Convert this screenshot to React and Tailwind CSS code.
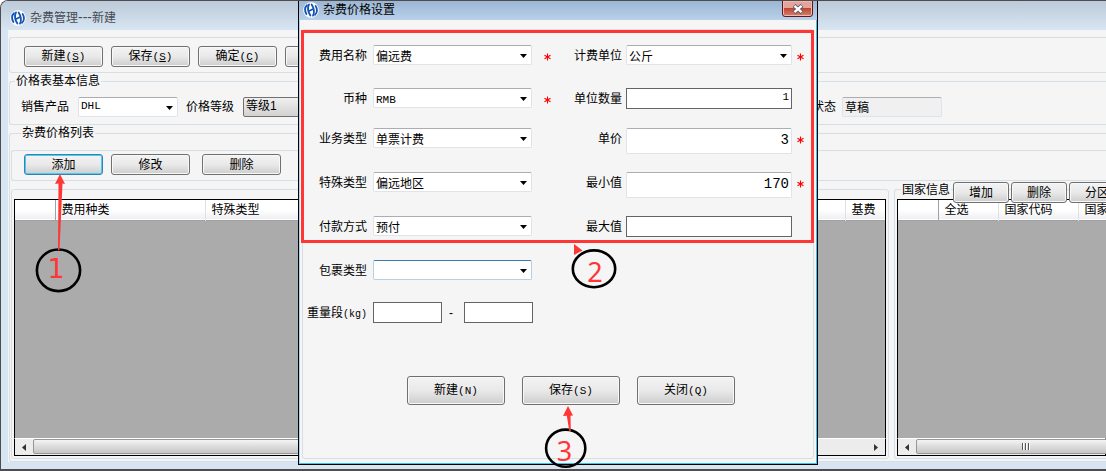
import clsx from 'clsx';

const baseColumns = [
  { name: '费用种类', width: 'w-[150px]' },
  { name: '特殊类型', width: 'w-[150px]' },
];

const countryColumns = [
  { name: '全选', width: 'w-[60px]' },
  { name: '国家代码', width: 'w-20' },
  { name: '国家名称', width: 'w-20' },
];

const Logo = () => (
  <svg width="16" height="16" viewBox="0 0 16 16" className="shrink-0" aria-hidden="true">
    <circle cx="8" cy="8" r="7.8" fill="#fff" />
    <g fill="none" stroke="#1353b4" strokeWidth="1.8" strokeLinecap="round">
      <path d="M4 3.2C1.6 5.2 1.4 9.2 3.4 12" />
      <path d="M12 12.8C14.4 10.8 14.6 6.8 12.6 4" />
      <path d="M6 2.4C4.4 5.6 5 10 7.4 13.6" />
      <path d="M10 13.6C11.6 10.4 11 6 8.6 2.4" />
      <path d="M6 9L10.2 7" />
    </g>
  </svg>
);

// Texto latino en mono para que mida la mitad de un carácter chino
const Key = ({ children, underline }) => (
  <span className="font-['Liberation_Mono'] text-[11px]">
    (<span className={clsx(underline && 'underline')}>{children}</span>)
  </span>
);

const WinButton = ({ children, className, active, label }) => (
  <button
    type="button"
    aria-label={label}
    className={clsx(
      'shrink-0 rounded-[3px] border bg-linear-to-b from-[#f3f3f3] from-0% via-[#e9e9e9] via-50% to-[#cdcdcd] whitespace-nowrap text-center leading-none',
      active ? 'border-[#3c7fb1] ring-1 ring-inset ring-[#46cdf5]' : 'border-[#707070] ring-1 ring-inset ring-[#f8f8f8]',
      className
    )}
  >
    {children}
  </button>
);

const Combo = ({ id, value, className, focused, disabled, latin }) => (
  <div className={clsx('relative h-5', className)}>
    <select
      id={id}
      defaultValue={value}
      className={clsx(
        'h-full w-full appearance-none rounded-[2px] border pl-[2px] pb-[2px] text-black outline-none',
        disabled
          ? 'border-[#707070] bg-linear-to-b from-[#f0f0f0] to-[#d2d2d2]'
          : focused
            ? 'border-[#b5cfe7] border-t-[#3d7bad] bg-white'
            : 'border-[#e2e3ea] border-t-[#abadb3] bg-white',
        latin && "font-['Liberation_Mono'] text-[11px]"
      )}
    >
      <option value={value}>{value}</option>
    </select>
    <svg width="7" height="4" viewBox="0 0 7 4" className="pointer-events-none absolute right-[5px] top-[9px]" aria-hidden="true">
      <path d="M0 0h7L3.5 4z" fill="#000" />
    </svg>
  </div>
);

const TextBox = ({ id, value = '', className, flat, label }) => (
  <input
    id={id}
    type="text"
    aria-label={label}
    defaultValue={value}
    className={clsx(
      "border bg-white px-[2px] text-right font-['Liberation_Mono'] text-black outline-none",
      flat ? 'h-[21px] border-[#646464] pb-1 text-[11px]' : 'h-[26px] rounded-[2px] border-[#e2e3ea] border-t-[#abadb3] pb-[2px] text-sm',
      className
    )}
  />
);

const Star = ({ show }) => (
  <span className="pt-2">
    {show && (
      <svg width="7" height="8" viewBox="0 0 7 8" aria-hidden="true">
        <path d="M3.5 0.5v7M0.5 2.2l6 3.6M6.5 2.2l-6 3.6" stroke="#ff0000" strokeWidth="1.1" />
      </svg>
    )}
  </span>
);

const Grid = ({ columns, last, className }) => (
  <div className={clsx('flex min-h-0 flex-1 flex-col overflow-hidden border border-black bg-[#ababab]', className)}>
    <table className="w-full table-fixed border-collapse">
      <thead>
        <tr className="h-5 border-b border-[#a0a0a0] bg-linear-to-b from-white from-50% to-[#eff0f3]">
          <th className="w-10 border-r border-[#a0a0a0]" />
          {columns.map((col) => (
            <th key={col.name} className={clsx('overflow-hidden border-r border-[#dfe0e3] p-0 pl-[6px] pt-px text-left font-normal leading-4 whitespace-nowrap', col.width)}>
              {col.name}
            </th>
          ))}
          <th className="p-0" />
          {last && (
            <th className="w-10 border-l border-[#dfe0e3] p-0 pl-[6px] pt-px text-left font-normal leading-4 whitespace-nowrap">{last}</th>
          )}
        </tr>
      </thead>
    </table>
  </div>
);

const ScrollArrow = ({ right }) => (
  <span className="flex w-[18px] shrink-0 items-center justify-center">
    <svg width="4" height="7" viewBox="0 0 4 7" aria-hidden="true">
      <path d={right ? 'M0 0v7L4 3.5z' : 'M4 0v7L0 3.5z'} fill="#333" />
    </svg>
  </span>
);

const ScrollBar = ({ grip, thumb, arrow }) => (
  <div className="flex h-[18px] shrink-0 border border-t-white border-black bg-[#ececec]">
    <ScrollArrow />
    <div className={clsx('flex h-[15px] items-center justify-center rounded-[2px] border border-[#979797] bg-linear-to-b from-[#f4f4f4] via-[#dcdcdc] to-[#c6c6c8]', thumb)}>
      {grip && (
        <span className="flex gap-px">
          <span className="h-[7px] w-[2px] border-r border-white bg-[#555]" />
          <span className="h-[7px] w-[2px] border-r border-white bg-[#555]" />
          <span className="h-[7px] w-[2px] border-r border-white bg-[#555]" />
        </span>
      )}
    </div>
    {arrow && (
      <>
        <span className="flex-1" />
        <ScrollArrow right />
      </>
    )}
  </div>
);

const PriceDialog = () => (
  <section className="absolute -top-px left-[297px] flex h-[465px] w-[520px] flex-col border border-t-0 border-black bg-[#f5f5f5]">
    <header className="flex h-5 shrink-0 items-center justify-between bg-linear-to-b from-[#9ab5d2] to-[#b9d1ea] pl-1 pr-1">
      <div className="flex items-center gap-1">
        <Logo />
        <h2 className="leading-4">杂费价格设置</h2>
      </div>
      <button
        type="button"
        aria-label="关闭"
        className="flex h-[17px] w-[31px] items-center justify-center self-start rounded-b-[3px] border border-[#5a1a1e] bg-linear-to-b from-[#e5a49b] from-45% via-[#bd4630] via-50% to-[#d5806c] ring-1 ring-inset ring-[#f0b8ae]"
      >
        <svg width="12" height="10" viewBox="0 0 12 10" aria-hidden="true">
          <path d="M2 1.5l8 7M10 1.5l-8 7" stroke="#535666" strokeWidth="4" />
          <path d="M2.4 1.8l7.2 6.4M9.6 1.8l-7.2 6.4" stroke="#fff" strokeWidth="2.4" />
        </svg>
      </button>
    </header>
    <div className="flex flex-1 flex-col border border-t-0 border-b-[#35c4f0] border-l-[#a9d4ef] border-r-[#35c4f0] px-[2px] pb-1 pt-[9px]">
      <form className="flex-1 rounded-[3px] border border-[#d5dfe5] pt-[15px]">
        <div className="grid grid-cols-[70px_159px_12px_26px_56px_166px_5px_7px] grid-rows-[43px_40px_44px_44px_44px_42px_auto] items-start leading-[22px]">
          <label htmlFor="feeName" className="pr-[6px] text-right whitespace-nowrap">费用名称</label>
          <Combo id="feeName" value="偏远费" />
          <span />
          <Star show />
          <label htmlFor="unit" className="pr-1 text-right whitespace-nowrap">计费单位</label>
          <Combo id="unit" value="公斤" />
          <span />
          <Star show />

          <label htmlFor="currency" className="pr-[6px] text-right whitespace-nowrap">币种</label>
          <Combo id="currency" value="RMB" latin />
          <span />
          <Star show />
          <label htmlFor="unitCount" className="pr-1 text-right whitespace-nowrap">单位数量</label>
          <TextBox id="unitCount" value="1" flat />
          <span />
          <Star />

          <label htmlFor="business" className="pr-[6px] text-right whitespace-nowrap">业务类型</label>
          <Combo id="business" value="单票计费" />
          <span />
          <Star />
          <label htmlFor="price" className="pr-1 text-right whitespace-nowrap">单价</label>
          <TextBox id="price" value="3" />
          <span />
          <Star show />

          <label htmlFor="special" className="pr-[6px] text-right whitespace-nowrap">特殊类型</label>
          <Combo id="special" value="偏远地区" />
          <span />
          <Star />
          <label htmlFor="min" className="pr-1 text-right whitespace-nowrap">最小值</label>
          <TextBox id="min" value="170" />
          <span />
          <Star show />

          <label htmlFor="payment" className="pr-[6px] text-right whitespace-nowrap">付款方式</label>
          <Combo id="payment" value="预付" />
          <span />
          <Star />
          <label htmlFor="max" className="pr-1 text-right whitespace-nowrap">最大值</label>
          <TextBox id="max" flat />
          <span />
          <Star />

          <label htmlFor="package" className="pr-[6px] text-right whitespace-nowrap">包裹类型</label>
          <Combo id="package" value="" focused />
          <span className="col-span-6" />

          <label htmlFor="weightFrom" className="pr-[6px] text-right whitespace-nowrap">
            重量段<span className="font-['Liberation_Mono'] text-[10px]">(kg)</span>
          </label>
          <div className="col-span-7 flex items-center">
            <TextBox id="weightFrom" flat className="w-[69px]" />
            <span className="w-[22px] pr-1 text-center leading-5">-</span>
            <TextBox id="weightTo" flat label="重量段" className="w-[69px]" />
          </div>
        </div>
        <div className="flex gap-[17px] pl-[104px] pt-[50px]">
          <WinButton className="h-[29px] w-[98px]">新建<Key>N</Key></WinButton>
          <WinButton className="h-[29px] w-[98px]">保存<Key>S</Key></WinButton>
          <WinButton className="h-[29px] w-[98px]">关闭<Key>Q</Key></WinButton>
        </div>
      </form>
    </div>
  </section>
);

// Marcas rojas y números de los pasos
const Steps = () => (
  <svg width="820" height="471" viewBox="0 0 820 471" className="pointer-events-none absolute -left-px -top-px" aria-hidden="true">
    <rect x="302.5" y="31.5" width="510" height="210" fill="none" stroke="#ff3636" strokeWidth="3" />
    <g fill="none" stroke="#000" strokeWidth="2.6">
      <ellipse cx="58.5" cy="270.3" rx="21.6" ry="20.8" />
      <ellipse cx="594" cy="268.8" rx="21.2" ry="18.4" />
      <ellipse cx="565.7" cy="448.2" rx="19.6" ry="18.6" />
    </g>
    <g fill="#ff3636">
      <path d="M60 174l5 10-2.5-.5L59.5 250h-1.5L58.5 183.5 55 184z" />
      <path d="M574 244v11l8.5-4.5z" />
      <path d="M568 406l5 9.5-2.5.2.3 15.300h-1.500l-2.500-15.300-3.800.3z" />
    </g>
    <g fill="#ff3636" fontSize="27" fontFamily="'Noto Sans', sans-serif" textAnchor="middle">
      <text x="56" y="278" fontFamily="'DejaVu Sans', sans-serif">1</text>
      <text x="595" y="282">2</text>
      <text x="564.5" y="461">3</text>
    </g>
  </svg>
);

const App = () => {
  return (
    <div className="relative flex h-screen min-h-[471px] flex-col overflow-hidden rounded-tl-lg border-b-2 border-l border-t border-[#4f4c50] bg-[#d7e4f2] font-['Liberation_Sans','Noto_Sans_CJK_SC',sans-serif] text-xs text-black">
      <header className="flex h-[29px] shrink-0 items-center gap-1 bg-linear-to-b from-[#bccad9] to-[#d8e5f2] pl-[9px] pt-1">
        <Logo />
        <h1 className="text-[#454b55]">杂费管理<span className="text-sm leading-none">---</span>新建</h1>
      </header>

      <main className="ml-[7px] mb-[7px] flex min-h-0 flex-1 flex-col bg-[#f5f5f5] pl-px pt-[7px]">
        <div className="flex h-9 shrink-0 gap-2 rounded-l-[3px] border border-r-0 border-[#d5dfe5] pl-[14px] pt-2">
          <WinButton className="h-[21px] w-[79px]">新建<Key underline>S</Key></WinButton>
          <WinButton className="h-[21px] w-[79px]">保存<Key underline>S</Key></WinButton>
          <WinButton className="h-[21px] w-[79px]">确定<Key underline>C</Key></WinButton>
          <WinButton className="h-[21px] w-[79px]" label="取消" />
        </div>

        <fieldset className="h-[52px] shrink-0 rounded-l-[3px] border border-r-0 border-[#d5dfe5]">
          <legend className="ml-[5px] px-px leading-4">价格表基本信息</legend>
          <div className="grid grid-cols-[165px_626px_auto] pl-[11px] pt-2">
            <div className="flex items-center gap-[9px]">
              <label htmlFor="product" className="whitespace-nowrap">销售产品</label>
              <Combo id="product" value="DHL" latin className="w-[100px]" />
            </div>
            <div className="flex items-center gap-[9px]">
              <label htmlFor="level" className="whitespace-nowrap">价格等级</label>
              <Combo id="level" value="等级1" disabled className="w-[100px]" />
            </div>
            <div className="flex items-center gap-[6px]">
              <label htmlFor="state" className="whitespace-nowrap">状态</label>
              <input id="state" type="text" readOnly value="草稿" className="h-5 w-[100px] rounded-[2px] border border-[#e2e3ea] border-t-[#abadb3] bg-[#f0f0f0] px-[2px] pb-[2px] outline-none" />
            </div>
          </div>
        </fieldset>

        <fieldset className="flex min-h-0 min-w-0 flex-1 flex-col rounded-l-[3px] border border-r-0 border-[#d5dfe5] pb-[2px] pl-px">
          <legend className="ml-[10px] px-px leading-4">杂费价格列表</legend>
          <div className="flex h-full flex-col pt-[9px]">
            <div className="flex h-[31px] shrink-0 gap-2 rounded-l-[3px] border border-r-0 border-[#d5dfe5] pl-3 pt-[3px]">
              <WinButton active className="h-[21px] w-[79px]">添加</WinButton>
              <WinButton className="h-[21px] w-[79px]">修改</WinButton>
              <WinButton className="ml-1 h-[21px] w-[79px]">删除</WinButton>
            </div>

            <div className="grid min-h-0 flex-1 grid-cols-[minmax(0,1fr)_212px] gap-[5px]">
              <div className="mt-2 flex min-h-0 flex-col rounded-[3px] border border-[#d5dfe5] px-[2px] pb-[2px] pt-[9px]">
                <Grid columns={baseColumns} last="基费" className="border-b-0" />
                <ScrollBar thumb="w-[700px]" arrow />
              </div>

              <div className="relative flex min-h-0 flex-col overflow-hidden">
                <div className="mt-2 flex min-h-0 flex-1 flex-col rounded-l-[3px] border border-r-0 border-[#d5dfe5] pb-[2px] pl-[2px] pt-[9px]">
                  <Grid columns={countryColumns} className="border-b-0 border-r-0" />
                  <ScrollBar grip thumb="w-[220px] shrink-0" />
                </div>
                <div className="absolute left-[7px] top-px flex gap-[2px]">
                  <h3 className="h-4 bg-[#f5f5f5] px-px leading-4 whitespace-nowrap">国家信息</h3>
                  <WinButton className="h-[21px] w-14">增加</WinButton>
                  <WinButton className="h-[21px] w-14">删除</WinButton>
                  <WinButton className="h-[21px] w-14">分区</WinButton>
                </div>
              </div>
            </div>
          </div>
        </fieldset>
      </main>

      <PriceDialog />
      <Steps />
    </div>
  );
};

export default App;
